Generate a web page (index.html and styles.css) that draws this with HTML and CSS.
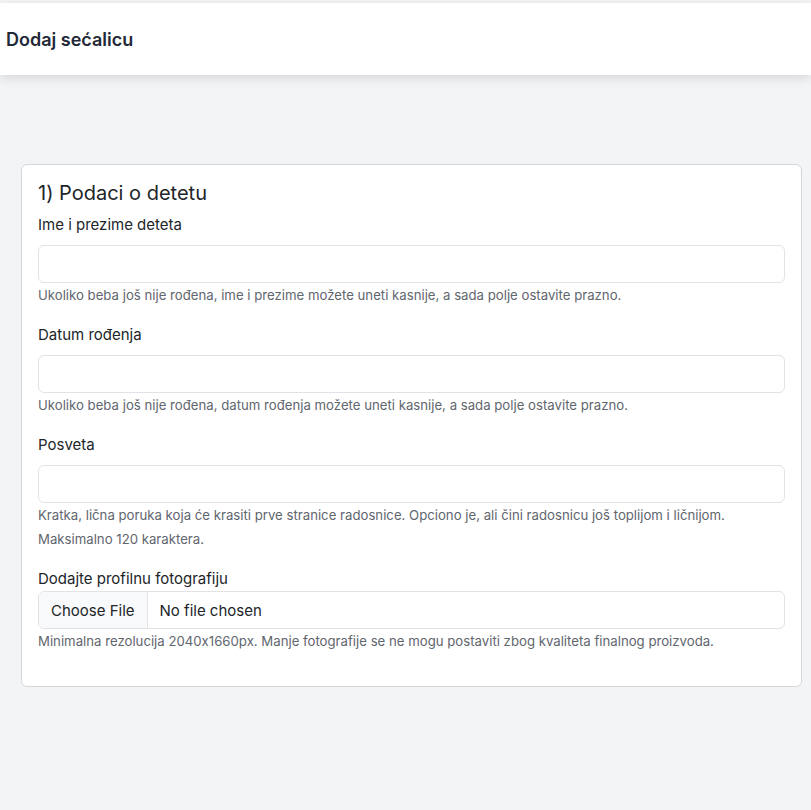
FILE: index.html
```html
<!DOCTYPE html>
<html lang="sr">
<head>
    <meta charset="UTF-8">
    <meta name="viewport" content="width=device-width, initial-scale=1.0">
    <title>Dodaj sećalicu</title>
    <link rel="stylesheet" href="styles.css">
</head>
<body>
    <header class="page-header">
        <h2>Dodaj sećalicu</h2>
    </header>

    <main class="page-content">
        <form class="card" id="keepsakeForm">
            <h5 class="card-title">1) Podaci o detetu</h5>

            <div class="field">
                <label for="childName">Ime i prezime deteta</label>
                <input type="text" id="childName" class="form-control">
                <div class="form-text">Ukoliko beba još nije rođena, ime i prezime možete uneti kasnije, a sada polje ostavite prazno.</div>
            </div>

            <div class="field">
                <label for="birthDate">Datum rođenja</label>
                <input type="text" id="birthDate" class="form-control">
                <div class="form-text">Ukoliko beba još nije rođena, datum rođenja možete uneti kasnije, a sada polje ostavite prazno.</div>
            </div>

            <div class="field">
                <label for="dedication">Posveta</label>
                <input type="text" id="dedication" class="form-control" maxlength="120">
                <div class="form-text">Kratka, lična poruka koja će krasiti prve stranice radosnice. Opciono je, ali čini radosnicu još toplijom i ličnijom.</div>
                <div class="form-text">Maksimalno 120 karaktera.</div>
            </div>

            <div class="field">
                <label for="photo" class="label-tight">Dodajte profilnu fotografiju</label>
                <input type="file" id="photo" class="form-control" accept="image/*">
                <div class="form-text">Minimalna rezolucija 2040x1660px. Manje fotografije se ne mogu postaviti zbog kvaliteta finalnog proizvoda.</div>
            </div>
        </form>
    </main>
</body>
</html>
```

FILE: styles.css
```css
* {
    box-sizing: border-box;
}
body {
    font-family: Inter, "Noto Sans", sans-serif;
    font-feature-settings: "calt" 0;
    background-color: #f3f4f6;
    color: #212529;
    margin: 0;
    padding: 3px 0 0;
}
.page-header {
    background-color: #fff;
    height: 72px;
    padding: 0 6px;
    display: flex;
    align-items: center;
    box-shadow: 0 3px 10px rgba(0, 0, 0, 0.12);
}
.page-header h2 {
    margin: 0;
    font-size: 18px;
    font-weight: 600;
    color: #1f2937;
}
.page-content {
    padding: 89px 9px 40px 21px;
}
.card {
    background-color: #fff;
    border: 1px solid #d4d6db;
    border-radius: 6px;
    padding: 16px 16px 19px;
}
.card-title {
    margin: 0 0 8px;
    font-size: 20px;
    font-weight: 400;
    line-height: 1.2;
}
.field {
    margin-bottom: 18px;
}
.field:last-child {
    margin-bottom: 16px;
}
label {
    display: block;
    font-size: 15px;
    line-height: 24px;
    margin-bottom: 8px;
}
.label-tight {
    margin-bottom: 0;
}
.form-control {
    display: block;
    width: 100%;
    height: 38px;
    padding: 6px 12px;
    font-family: inherit;
    font-size: 15px;
    color: #212529;
    background-color: #fff;
    border: 1px solid #e1e3e6;
    border-radius: 6px;
    outline: none;
}
input[type="file"].form-control {
    padding: 0 12px 0 0;
    overflow: hidden;
    line-height: 36px;
}
input[type="file"]::file-selector-button {
    height: 36px;
    margin: 0 12px 0 0;
    padding: 0 12px;
    font-family: inherit;
    font-size: 15px;
    color: #212529;
    background-color: #f8f9fa;
    border: none;
    border-right: 1px solid #e1e3e6;
    border-radius: 0;
}
.form-text {
    margin-top: 2px;
    font-size: 13.2px;
    line-height: 20px;
    color: #5f666e;
}
.form-text + .form-text {
    margin-top: 4px;
}
```
